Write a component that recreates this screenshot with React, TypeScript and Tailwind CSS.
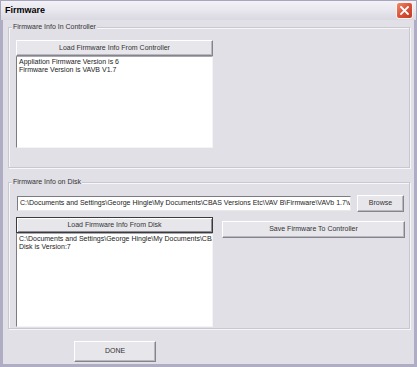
import React from 'react';

function Button({ label, className = '', focused = false }: { label: string; className?: string; focused?: boolean }) {
  return (
    <div
      className={`flex items-center justify-center bg-[#e7e6eb] text-[#333] border ${
        focused
          ? 'border-[#3a3a3a] shadow-[inset_1px_1px_0_#fff,inset_-1px_-1px_0_#8d8c94]'
          : 'border-t-white border-l-white border-b-[#85848c] border-r-[#85848c] shadow-[inset_-1px_-1px_0_#b9b8c0]'
      } ${className}`}
    >
      {label}
    </div>
  );
}

function TextBox({ lines, className = '' }: { lines: string[]; className?: string }) {
  return (
    <div
      className={`bg-white border-l border-t border-l-[#7c7b82] border-t-[#a9a8ae] border-r border-b border-r-[#f4f4f6] border-b-[#f4f4f6] pl-[2px] pt-[1px] text-[#222] leading-[8px] overflow-hidden ${className}`}
    >
      {lines.map((l) => (
        <div key={l} className="whitespace-nowrap">
          {l}
        </div>
      ))}
    </div>
  );
}

function GroupBox({ title, className = '', children }: { title: string; className?: string; children: React.ReactNode }) {
  return (
    <div
      className={`relative border border-[#c9c8d0] shadow-[inset_1px_1px_0_#f7f7f9,1px_1px_0_#f7f7f9] ${className}`}
    >
      <span className="absolute left-[3px] top-[-5px] px-[1px] bg-[#e1e0e6] text-[#333] leading-[8px]">
        {title}
      </span>
      {children}
    </div>
  );
}

export default function App() {
  return (
    <div className="w-[417px] h-[367px] flex flex-col bg-[#e1e0e6] font-['Liberation_Sans',Arial,sans-serif] text-[7px] overflow-hidden">
      {/* Title bar */}
      <div className="h-[20px] shrink-0 flex items-center justify-between pl-[4px] pr-[3px] bg-gradient-to-b from-[#f3f2f7] via-[#e8e7ee] to-[#d9d8e1] border-t border-l border-r border-[#a7a6bd]">
        <span className="font-bold text-[9px] text-black">Firmware</span>
        <div className="w-[17px] h-[17px] rounded-[3px] border border-[#fff4f0] bg-gradient-to-br from-[#ec8a6c] via-[#d9533a] to-[#c23a24] flex items-center justify-center">
          <svg width="9" height="9" viewBox="0 0 9 9">
            <path d="M1 1 L8 8 M8 1 L1 8" stroke="#fff" strokeWidth="1.8" strokeLinecap="square" />
          </svg>
        </div>
      </div>

      {/* Body */}
      <div className="flex-1 border-l-[3px] border-r-[3px] border-b-[3px] border-[#aeadc4] pl-[5px] pt-[7px]">
        <GroupBox title="Firmware Info In Controller" className="w-[402px] h-[141px] pt-[12px] pl-[7px]">
          <Button label="Load Firmware Info From Controller" className="w-[197px] h-[16px]" />
          <TextBox
            className="w-[197px] h-[92px]"
            lines={['Appliation Firmware Version is 6', 'Firmware Version is VAVB V1.7']}
          />
        </GroupBox>

        <GroupBox title="Firmware Info on Disk" className="mt-[14px] w-[402px] h-[147px] pt-[12px] pl-[7px]">
          <div className="flex items-center gap-[6px]">
            <div className="ml-[1px] w-[334px] h-[15px] bg-white border border-l-[#7c7b82] border-t-[#7c7b82] border-r-[#e9e9ec] border-b-[#e9e9ec] flex items-center pl-[2px] text-[#222] whitespace-nowrap overflow-hidden">
              C:\Documents and Settings\George Hingle\My Documents\CBAS Versions Etc\VAV B\Firmware\VAVb 1.7\var
            </div>
            <Button label="Browse" className="w-[47px] h-[17px]" />
          </div>
          <div className="mt-[5px] flex gap-[9px]">
            <div className="flex flex-col">
              <Button label="Load Firmware Info From Disk" focused className="w-[197px] h-[16px]" />
              <TextBox
                className="w-[197px] h-[94px]"
                lines={[
                  'C:\\Documents and Settings\\George Hingle\\My Documents\\CBAS Versions Etc',
                  'Disk is Version:7',
                ]}
              />
            </div>
            <Button label="Save Firmware To Controller" className="mt-[4px] w-[183px] h-[17px]" />
          </div>
        </GroupBox>

        <Button label="DONE" className="mt-[12px] ml-[66px] w-[82px] h-[21px]" />
      </div>
    </div>
  );
}
